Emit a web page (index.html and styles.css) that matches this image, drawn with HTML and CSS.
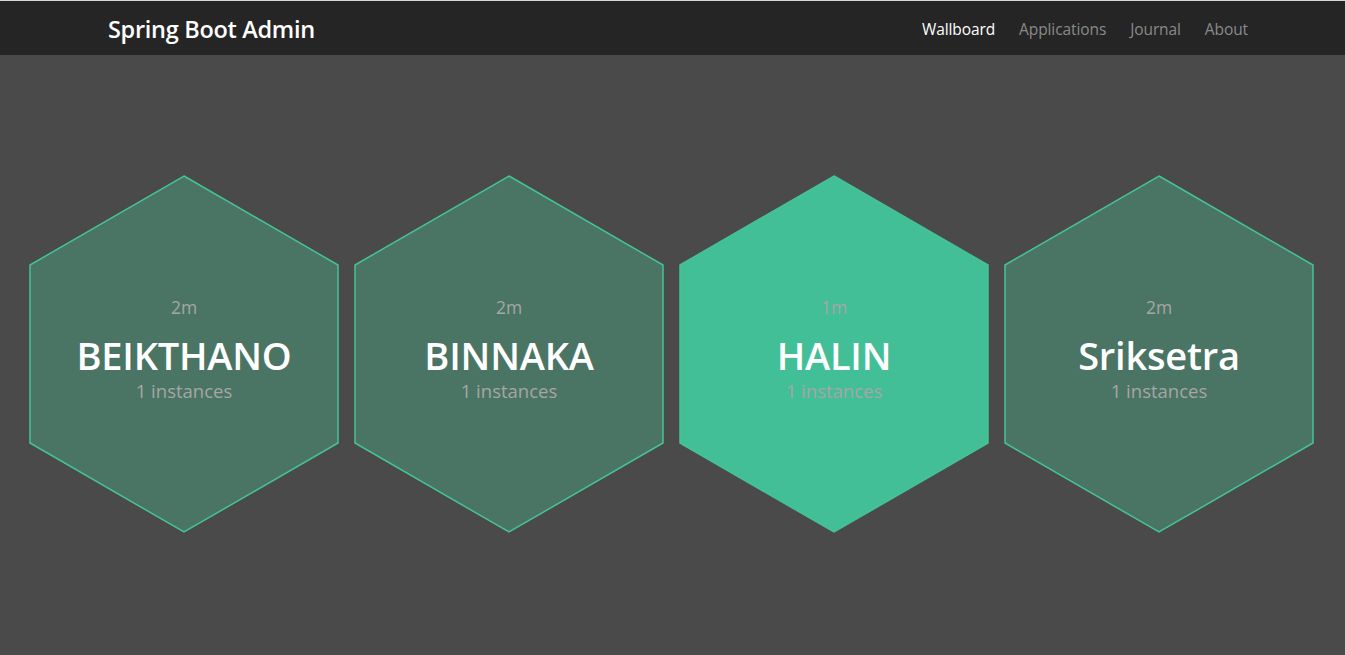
FILE: index.html
```html
<!DOCTYPE html>
<html lang="en">
<head>
<meta charset="utf-8">
<title>Spring Boot Admin</title>
<link rel="stylesheet" href="styles.css">
</head>
<body>
<header class="navbar">
  <div class="navbar-inner">
    <a class="brand" href="#">Spring Boot Admin</a>
    <nav class="nav">
      <a class="nav-link active" href="#">Wallboard</a>
      <a class="nav-link" href="#">Applications</a>
      <a class="nav-link" href="#">Journal</a>
      <a class="nav-link" href="#">About</a>
    </nav>
  </div>
</header>
<main class="wallboard">
  <div class="hex">
    <svg class="hex-shape" viewBox="0 0 310 358" width="310" height="358"><polygon points="155,1 309,90 309,268 155,357 1,268 1,90"/></svg>
    <div class="hex-content">
      <div class="uptime">2m</div>
      <div class="app-name">BEIKTHANO</div>
      <div class="instances">1 instances</div>
    </div>
  </div>
  <div class="hex">
    <svg class="hex-shape" viewBox="0 0 310 358" width="310" height="358"><polygon points="155,1 309,90 309,268 155,357 1,268 1,90"/></svg>
    <div class="hex-content">
      <div class="uptime">2m</div>
      <div class="app-name">BINNAKA</div>
      <div class="instances">1 instances</div>
    </div>
  </div>
  <div class="hex hex-active">
    <svg class="hex-shape" viewBox="0 0 310 358" width="310" height="358"><polygon points="155,1 309,90 309,268 155,357 1,268 1,90"/></svg>
    <div class="hex-content">
      <div class="uptime">1m</div>
      <div class="app-name">HALIN</div>
      <div class="instances">1 instances</div>
    </div>
  </div>
  <div class="hex">
    <svg class="hex-shape" viewBox="0 0 310 358" width="310" height="358"><polygon points="155,1 309,90 309,268 155,357 1,268 1,90"/></svg>
    <div class="hex-content">
      <div class="uptime">2m</div>
      <div class="app-name">Sriksetra</div>
      <div class="instances">1 instances</div>
    </div>
  </div>
</main>
</body>
</html>
```
FILE: styles.css
```css
html, body {
  margin: 0;
  padding: 0;
}
body {
  background: #4a4a4a;
  font-family: "Open Sans", "Noto Sans", sans-serif;
  border-top: 1px solid #d6d6d6;
  height: 654px;
  overflow: hidden;
}
.navbar {
  background: #252525;
  height: 54px;
}
.navbar-inner {
  display: flex;
  align-items: center;
  justify-content: space-between;
  height: 100%;
  padding: 2px 97px 0 108px;
  box-sizing: border-box;
}
.brand {
  color: #ffffff;
  text-decoration: none;
  font-size: 23.5px;
  font-weight: 600;
  letter-spacing: -0.3px;
}
.nav {
  display: flex;
  gap: 24px;
}
.nav-link {
  color: #8a8a8a;
  text-decoration: none;
  font-size: 15.5px;
  letter-spacing: -0.1px;
}
.nav-link.active {
  color: #ffffff;
}
.wallboard {
  display: flex;
  justify-content: center;
  gap: 15px;
  padding-top: 120px;
  padding-right: 2px;
}
.hex {
  position: relative;
  width: 310px;
  height: 358px;
}
.hex-shape {
  position: absolute;
  left: 0;
  top: 0;
}
.hex-shape polygon {
  fill: #4a7565;
  stroke: #44c397;
  stroke-width: 1.5;
}
.hex-active .hex-shape polygon {
  fill: #43bf97;
}
.hex-content {
  position: relative;
  height: 100%;
  display: flex;
  flex-direction: column;
  align-items: center;
  justify-content: center;
  padding-bottom: 10px;
  box-sizing: border-box;
  text-align: center;
}
.uptime {
  color: #a6a6a6;
  font-size: 17.5px;
  line-height: 22px;
}
.app-name {
  color: #ffffff;
  font-size: 38px;
  font-weight: 600;
  line-height: 46px;
  letter-spacing: -0.2px;
  margin-top: 14px;
}
.instances {
  color: #a6a6a6;
  font-size: 18.5px;
  line-height: 22px;
  margin-top: 2px;
}
```
